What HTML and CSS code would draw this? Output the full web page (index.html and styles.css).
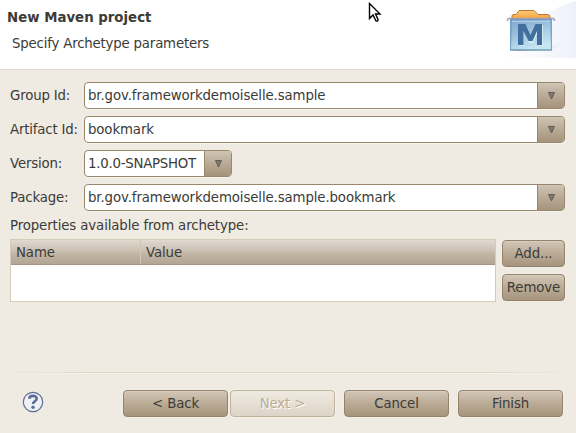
FILE: index.html
```html
<!DOCTYPE html>
<html lang="en">
<head>
<meta charset="utf-8">
<title>New Maven project</title>
<link rel="stylesheet" href="styles.css">
</head>
<body>
<main class="dialog">
  <header class="banner">
    <div class="heading">
      <h1>New Maven project</h1>
      <p>Specify Archetype parameters</p>
    </div>
    <svg class="logo" width="86" height="66" viewBox="490 0 86 66">
      <defs>
        <linearGradient id="sweep" x1="0" y1="0" x2="1" y2="0"><stop offset="0" stop-color="#fff"/><stop offset=".5" stop-color="#f8f9fd"/><stop offset="1" stop-color="#eff1fa"/></linearGradient>
        <linearGradient id="box" x1="0" y1="0" x2=".5" y2="1"><stop offset="0" stop-color="#7aa3cf"/><stop offset=".5" stop-color="#9fc4de"/><stop offset="1" stop-color="#c6e6f2"/></linearGradient>
        <linearGradient id="side" x1="0" y1="0" x2="0" y2="1"><stop offset="0" stop-color="#6f9fd0" stop-opacity=".7"/><stop offset="1" stop-color="#4f8abb" stop-opacity=".7"/></linearGradient>
        <linearGradient id="shade" x1="0" y1="0" x2="1" y2="0"><stop offset="0" stop-color="#b5b5ca"/><stop offset="1" stop-color="#e4e5f2" stop-opacity="0"/></linearGradient>
        <linearGradient id="tab" x1="0" y1="0" x2="0" y2="1"><stop offset="0" stop-color="#ffc978"/><stop offset="1" stop-color="#f2a13f"/></linearGradient>
      </defs>
      <path d="M576 1C564 4 552 9 543 18C532 34 519 50 502 58H576Z" fill="url(#sweep)"/>
      <path d="M552 46L568 39L564 44L550 51H510Z" fill="url(#shade)"/>
      <path d="M512 19V16Q512 14.500 514 14.500H516L519 10.500H534L538 14.500H547Q550 14.500 550 17V19Z" fill="url(#tab)" stroke="#b87a35"/>
      <path d="M507.500 21V20Q507.500 18.500 509 18.500H553Q554.500 18.500 554.500 21" fill="none" stroke="#a0a3aa" stroke-width="1.500"/>
      <path d="M510 19H552V50H510Z" fill="url(#box)"/>
      <path d="M510 19H512L511 49L510 50ZM552 19H550L551 49L552 50Z" fill="url(#side)"/>
      <path d="M510 19.500H552" stroke="#7798cf"/>
      <path d="M512 21.500H550" stroke="#b4cee8"/>
      <path d="M510 50H552" stroke="#467a9b"/>
      <path d="M519 46V25H526L531 36L536 25H543V46H538V32L533 43H529L524 32V46Z" fill="#d5eaf5"/>
      <path d="M518 45V24H525.500L530.500 35L535.500 24H542V45H537V31L532.500 41H528.500L523.500 31V45Z" fill="#41709f"/>
    </svg>
    <svg class="pointer" width="14" height="21" viewBox="0 0 14 21"><path d="M1.500 1.500V16.500L5 13L8 19Q10 19.500 10 17.500L7.500 12H12Z" fill="#fff" stroke="#000" stroke-width="1.400"/></svg>
  </header>

  <section class="fields">
    <label>Group Id:</label>
    <div class="combo"><span class="text">br.gov.frameworkdemoiselle.sample</span><span class="drop"><svg width="9" height="8"><path d="M1.500 .500H7.500L4.500 7Z"/></svg></span></div>
    <label>Artifact Id:</label>
    <div class="combo"><span class="text">bookmark</span><span class="drop"><svg width="9" height="8"><path d="M1.500 .500H7.500L4.500 7Z"/></svg></span></div>
    <label>Version:</label>
    <div class="combo short"><span class="text">1.0.0-SNAPSHOT</span><span class="drop"><svg width="9" height="8"><path d="M1.500 .500H7.500L4.500 7Z"/></svg></span></div>
    <label>Package:</label>
    <div class="combo"><span class="text">br.gov.frameworkdemoiselle.sample.bookmark</span><span class="drop"><svg width="9" height="8"><path d="M1.500 .500H7.500L4.500 7Z"/></svg></span></div>
  </section>

  <p class="caption">Properties available from archetype:</p>
  <section class="properties">
    <div class="table">
      <div class="columns"><span>Name</span><span>Value</span></div>
    </div>
    <div class="actions">
      <button>Add...</button>
      <button>Remove</button>
    </div>
  </section>

  <div class="separator"></div>
  <footer class="footer">
    <svg class="help" width="22" height="22" viewBox="0 0 22 22">
      <circle cx="11" cy="11" r="9.700" fill="#f0f0f2" stroke="#5b6f98" stroke-width="1.200"/>
      <path d="M7.300 7.800C7.300 3.900 14.700 3.900 14.700 7.600C14.700 10.300 11 10.200 11 13" fill="none" stroke="#596d98" stroke-width="2.600"/>
      <circle cx="11" cy="16.300" r="1.700" fill="#596d98"/>
    </svg>
    <button>&lt; Back</button>
    <button class="next" disabled>Next &gt;</button>
    <button class="cancel">Cancel</button>
    <button class="finish">Finish</button>
  </footer>
</main>
</body>
</html>
```
FILE: styles.css
```css
* { box-sizing: border-box; }
body {
  margin: 0;
  background: #efeae2;
  color: #3c3b37;
  font: 13.333px/16px "DejaVu Sans", sans-serif;
  letter-spacing: -0.12px;
}
h1, p { margin: 0; font-size: inherit; }
h1 { letter-spacing: 0; }
.dialog { display: flex; flex-direction: column; height: 433px; overflow: hidden; }

.banner {
  position: relative;
  display: flex;
  justify-content: space-between;
  height: 70px;
  background: #fff;
  border-bottom: 1px solid #dedad2;
}
.heading { padding: 10px 0 0 7px; }
.heading p { margin: 10px 0 0 5px; letter-spacing: -0.19px; }
.pointer { position: absolute; left: 368px; top: 2px; }

.fields {
  display: grid;
  grid-template-columns: 74px 481px;
  grid-auto-rows: 27px;
  row-gap: 7px;
  align-items: center;
  padding: 12px 0 0 10px;
}
.fields label { white-space: nowrap; letter-spacing: -0.18px; }
.combo {
  display: flex;
  height: 27px;
  border: 1px solid #99876c;
  border-radius: 4px;
  background: #fff;
  box-shadow: 0 1px 0 #f7f4ef;
  overflow: hidden;
}
.short { width: 148px; }
.short .text { letter-spacing: -0.25px; }
.text { flex: 1; padding: 5px 0 0 3px; white-space: nowrap; }
.drop {
  display: flex;
  align-items: center;
  justify-content: center;
  width: 27px;
  border-left: 1px solid #99876c;
  background: linear-gradient(#d0c4b4, #b9aa96 50%, #a5947c);
}
.drop path { fill: #817b72; stroke: #615c55; }

.caption { margin: 7px 0 0 10px; }
.properties { display: flex; gap: 6px; margin: 5px 0 0 10px; }
.table {
  width: 486px;
  height: 63px;
  border: 1px solid #d5cbb9;
  background: #fff;
}
.columns {
  display: grid;
  grid-template-columns: 130px 1fr;
  height: 25px;
  border-bottom: 1px solid #a5967f;
  background: linear-gradient(#e2dad0, #cdc2b5 40%, #c0b4a4 60%, #b3a593);
}
.columns span { padding: 5px 0 0 5px; line-height: 16px; }
.columns span:first-child { border-right: 1px solid #d1c7b9; }
.actions { display: flex; flex-direction: column; gap: 7px; padding-top: 1px; width: 63px; }
button {
  height: 27px;
  padding: 1px 0 0;
  border: 1px solid #94836b;
  border-radius: 4px;
  background: linear-gradient(#d2c6b6, #baab96 50%, #a6957d);
  box-shadow: inset 0 1px 0 #d8cdbf, 0 0 0 1px #f2ede6;
  color: #3c3b37;
  font: inherit;
  letter-spacing: inherit;
}
button:disabled {
  border-color: #c0b29c;
  background: linear-gradient(#efeae1, #ddd4c7);
  box-shadow: 0 0 0 1px #f4f0ea;
  color: #c1ac90;
  text-shadow: 1px 1px 0 #fff;
}

.separator {
  height: 2px;
  margin-top: 70px;
  background: linear-gradient(90deg, #efeae2, transparent 15%, transparent 85%, #efeae2),
    linear-gradient(#e0d8c2 50%, #f6f2eb 50%);
}
.footer { display: flex; align-items: center; height: 27px; margin: 16px 0 0 22px; }
.footer button { width: 105px; }
.help { margin: 0 79px 4px 0; }
.next { margin-left: 2px; }
.cancel, .finish { margin-left: 9px; }
```
